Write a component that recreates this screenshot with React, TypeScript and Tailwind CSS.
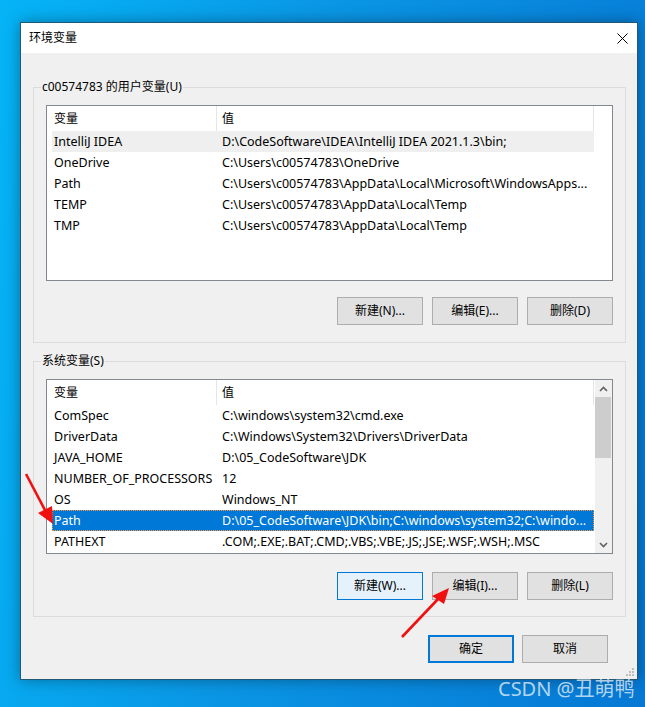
import React from "react";

const userVars: [string, string][] = [
  ["IntelliJ IDEA", "D:\\CodeSoftware\\IDEA\\IntelliJ IDEA 2021.1.3\\bin;"],
  ["OneDrive", "C:\\Users\\c00574783\\OneDrive"],
  ["Path", "C:\\Users\\c00574783\\AppData\\Local\\Microsoft\\WindowsApps..."],
  ["TEMP", "C:\\Users\\c00574783\\AppData\\Local\\Temp"],
  ["TMP", "C:\\Users\\c00574783\\AppData\\Local\\Temp"],
];

const sysVars: [string, string][] = [
  ["ComSpec", "C:\\windows\\system32\\cmd.exe"],
  ["DriverData", "C:\\Windows\\System32\\Drivers\\DriverData"],
  ["JAVA_HOME", "D:\\05_CodeSoftware\\JDK"],
  ["NUMBER_OF_PROCESSORS", "12"],
  ["OS", "Windows_NT"],
  ["Path", "D:\\05_CodeSoftware\\JDK\\bin;C:\\windows\\system32;C:\\windo..."],
  ["PATHEXT", ".COM;.EXE;.BAT;.CMD;.VBS;.VBE;.JS;.JSE;.WSF;.WSH;.MSC"],
];

const Button = (props: any) => {
  const { label, variant } = props;
  let cls = "border border-[#adadad] bg-[#e1e1e1]";
  if (variant === "hover") cls = "border border-[#0078d7] bg-[#e5f1fb]";
  if (variant === "default") cls = "border-2 border-[#0078d7] bg-[#e1e1e1]";
  return (
    <div
      className={`${cls} w-[86px] h-[28px] flex items-center justify-center text-[12px] text-black`}
    >
      {label}
    </div>
  );
};

const Header = () => (
  <div className="flex h-[25px] w-[547px] bg-white text-[12px] leading-[25px]">
    <div className="w-[170px] pl-[7px] border-r border-[#e5e5e5]">变量</div>
    <div className="flex-1 pl-[5px] border-r border-[#e5e5e5]">值</div>
  </div>
);

const Row = (props: any) => {
  const { name, value, state } = props;
  let cls = "text-black border border-transparent";
  if (state === "hover") cls = "bg-[#efefef] text-black border border-transparent";
  if (state === "selected")
    cls = "bg-[#0078d7] text-white border border-dotted border-[#ff9a3c]";
  return (
    <div
      className={`${cls} ml-[5px] w-[542px] h-[21px] flex text-[12.5px] leading-[19px] whitespace-nowrap`}
    >
      <div className="w-[169px] pl-[1px] overflow-hidden">{name}</div>
      <div className="flex-1 overflow-hidden">{value}</div>
    </div>
  );
};

const Chevron = ({ up }: { up: boolean }) => (
  <svg width="9" height="6" viewBox="0 0 9 6">
    <polyline
      points={up ? "1,5 4.5,1.5 8,5" : "1,1 4.5,4.5 8,1"}
      fill="none"
      stroke="#606060"
      strokeWidth="1.6"
    />
  </svg>
);

const GroupBox = (props: any) => {
  const { title, children, className } = props;
  return (
    <fieldset className={`border border-[#dcdcdc] mx-[12px] w-[593px] ${className}`}>
      <legend className="ml-[7px] px-[1px] text-[12px] leading-[16px] text-black">
        {title}
      </legend>
      {children}
    </fieldset>
  );
};

export default function App() {
  return (
    <div className="relative w-[645px] h-[707px] overflow-hidden bg-[linear-gradient(100deg,#05b4f6_0%,#0a95e4_45%,#0678d4_100%)] pt-[22px] pl-[20px] font-['Noto_Sans','Noto_Sans_CJK_SC',sans-serif]">
      {/* dialog */}
      <div className="relative w-[618px] border border-[#1f5878] bg-[#f0f0f0] shadow-[0_0_14px_rgba(0,0,0,0.35)]">
        <div className="h-[30px] bg-white flex items-center justify-between pl-[8px] pr-[9px]">
          <span className="text-[12px] text-black">环境变量</span>
          <svg width="11" height="11" viewBox="0 0 11 11">
            <path d="M0.5 0.5 L10.5 10.5 M10.5 0.5 L0.5 10.5" stroke="#000" strokeWidth="1" />
          </svg>
        </div>

        <GroupBox title="c00574783 的用户变量(U)" className="mt-[26px] pb-[17px]">
          <div className="px-[12px]">
            <div className="mt-[10px] h-[176px] border border-[#828790] bg-white">
              <Header />
              {userVars.map(([n, v], i) => (
                <Row key={n + i} name={n} value={v} state={i === 0 ? "hover" : ""} />
              ))}
            </div>
            <div className="mt-[16px] flex justify-end gap-[9px]">
              <Button label="新建(N)..." />
              <Button label="编辑(E)..." />
              <Button label="删除(D)" />
            </div>
          </div>
        </GroupBox>

        <GroupBox title="系统变量(S)" className="mt-[10px] pb-[16px]">
          <div className="px-[12px]">
            <div className="mt-[10px] h-[175px] border border-[#828790] bg-white flex">
              <div className="flex-1 overflow-hidden">
                <Header />
                {sysVars.map(([n, v], i) => (
                  <Row key={n + i} name={n} value={v} state={i === 5 ? "selected" : ""} />
                ))}
              </div>
              <div className="w-[17px] bg-[#f0f0f0] flex flex-col">
                <div className="h-[17px] flex items-center justify-center">
                  <Chevron up={true} />
                </div>
                <div className="h-[61px] w-[16px] bg-[#cdcdcd]" />
                <div className="flex-1" />
                <div className="h-[17px] flex items-center justify-center">
                  <Chevron up={false} />
                </div>
              </div>
            </div>
            <div className="mt-[18px] flex justify-end gap-[9px]">
              <Button label="新建(W)..." variant="hover" />
              <Button label="编辑(I)..." />
              <Button label="删除(L)" />
            </div>
          </div>
        </GroupBox>

        <div className="mt-[18px] pb-[16px] pr-[29px] flex justify-end gap-[8px]">
          <Button label="确定" variant="default" />
          <Button label="取消" />
        </div>

        {/* resize grip */}
        <svg className="absolute right-[3px] bottom-[3px]" width="9" height="9" viewBox="0 0 9 9">
          <rect x="7" y="1" width="2" height="2" fill="#bdbdbd" />
          <rect x="4" y="4" width="2" height="2" fill="#bdbdbd" />
          <rect x="7" y="4" width="2" height="2" fill="#bdbdbd" />
          <rect x="1" y="7" width="2" height="2" fill="#bdbdbd" />
          <rect x="4" y="7" width="2" height="2" fill="#bdbdbd" />
          <rect x="7" y="7" width="2" height="2" fill="#bdbdbd" />
        </svg>
      </div>

      {/* annotation arrows */}
      <svg className="absolute left-0 top-0 pointer-events-none" width="645" height="707" viewBox="0 0 645 707">
        <line x1="26" y1="474" x2="46" y2="512" stroke="#f01010" strokeWidth="2.6" />
        <polygon points="38,513 52,506 53,524" fill="#f01010" />
        <line x1="402" y1="637" x2="439" y2="598" stroke="#f01010" strokeWidth="2.6" />
        <polygon points="432,596 444,604 449,588" fill="#f01010" />
      </svg>

      {/* watermark */}
      <div className="absolute left-[498px] top-[676px] text-[20px] leading-[26px] text-white/70 whitespace-nowrap font-['Noto_Sans','Noto_Sans_CJK_SC',sans-serif]">
        CSDN @丑萌鸭
      </div>
    </div>
  );
}
